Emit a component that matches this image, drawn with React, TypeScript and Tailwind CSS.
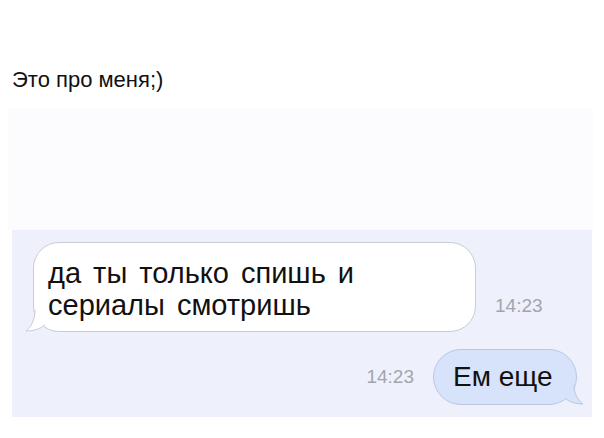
import React from 'react';

const font = { fontFamily: '"Liberation Sans", Arial, sans-serif' };

function LeftTail() {
  return (
    <svg className="absolute left-[-9px] bottom-[-1px]" width="26" height="22" viewBox="0 0 26 22">
      <path d="M10 0 C10 10 6 17 1 21 C8 21 15 19 20 15 L26 15 L26 0 Z" fill="#ffffff" />
      <path d="M10 0 C10 10 6 17 1 21 C8 21 15 19 20 15" fill="none" stroke="#c9ccd3" strokeWidth="1" />
    </svg>
  );
}

function RightTail() {
  return (
    <svg className="absolute right-[-8px] bottom-[-1px]" width="24" height="20" viewBox="0 0 24 20">
      <path d="M14 0 C14 9 18 15 23 19 C16 19 9 17 5 13 L0 13 L0 0 Z" fill="#d6e3fa" />
      <path d="M14 0 C14 9 18 15 23 19 C16 19 9 17 5 13" fill="none" stroke="#b9c8e2" strokeWidth="1" />
    </svg>
  );
}

export default function App() {
  return (
    <div className="w-[604px] h-[438px] bg-white overflow-hidden" style={font}>
      <div className="pl-[12px] pt-[67px] text-[22px] leading-[26px] text-[#111]">Это про меня;)</div>

      <div className="mt-[15px] ml-[8px] w-[585px] h-[122px] bg-[#fcfbfe]" />

      <div className="ml-[12px] w-[580px] h-[187px] bg-[#eef1fb] pt-[12px]">
        <div className="flex items-end">
          <div className="relative ml-[21px] w-[443px] h-[90px] bg-white border border-[#c9ccd3] rounded-[26px] pl-[14px] pt-[14px] text-[29px] leading-[32px] [word-spacing:4px] text-[#111]">
            <LeftTail />
            <div className="relative">
              да ты только спишь и
              <br />
              сериалы смотришь
            </div>
          </div>
          <div className="ml-[19px] mb-[15px] text-[19px] leading-[22px] text-[#a3a5ad]">14:23</div>
        </div>

        <div className="flex items-center justify-end mt-[17px] pr-[15px]">
          <div className="mr-[19px] text-[19px] leading-[22px] text-[#a3a5ad]">14:23</div>
          <div className="relative w-[144px] h-[56px] bg-[#d6e3fa] border border-[#b9c8e2] rounded-[28px] pl-[19px] pt-[12px] text-[28px] leading-[30px] text-[#111]">
            <RightTail />
            <div className="relative">Ем еще</div>
          </div>
        </div>
      </div>
    </div>
  );
}
